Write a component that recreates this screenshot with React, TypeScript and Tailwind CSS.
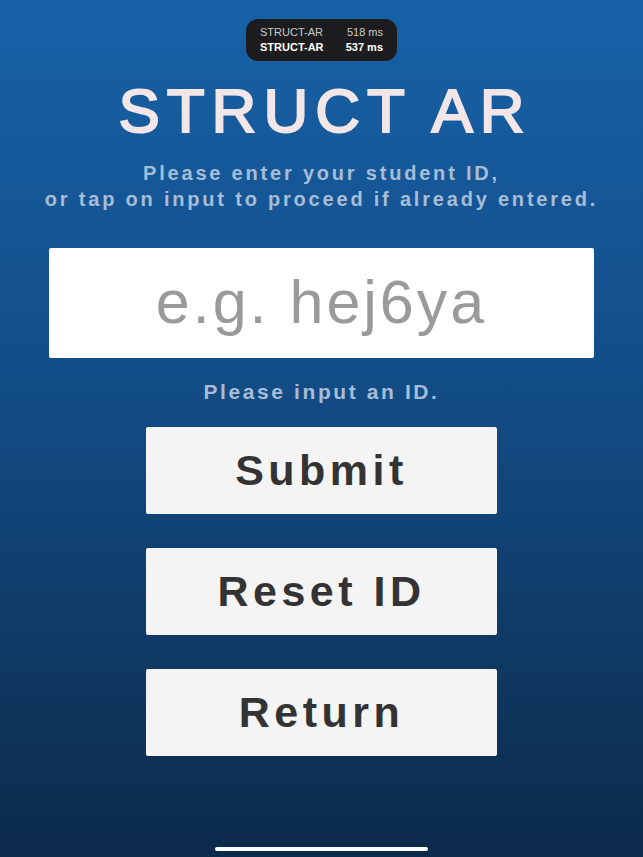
import React from 'react'

const font = { fontFamily: '"Liberation Sans", Arial, sans-serif' }

const Button = ({ label }: { label: string }) => (
  <button className="flex h-[87px] w-[351px] items-center justify-center rounded-[2px] bg-[#f4f4f4] text-[43px] font-bold tracking-[4.5px] text-[#333333]">
    {label}
  </button>
)

const App = () => {
  return (
    <div
      className="flex h-[857px] w-full flex-col items-center overflow-hidden bg-gradient-to-b from-[#1762a8] via-[#124a82] to-[#0c2a4a]"
      style={font}
    >
      {/* recording pill */}
      <div className="mt-[19px] flex h-[42px] w-[151px] flex-col justify-center gap-[2px] rounded-[12px] bg-[#1c1c1e] px-[14px] text-[11px] leading-[13px]">
        <div className="flex justify-between text-[#c9c9cb]">
          <span>STRUCT-AR</span>
          <span>518 ms</span>
        </div>
        <div className="flex justify-between font-bold text-white">
          <span>STRUCT-AR</span>
          <span>537 ms</span>
        </div>
      </div>

      {/* title */}
      <h1 className="mt-[19px] pl-[7px] text-[62px] leading-none tracking-[7px] text-[#f2e6e8] [-webkit-text-stroke:2px_#f2e6e8]">
        STRUCT AR
      </h1>

      {/* instructions */}
      <p className="mt-[18px] text-center text-[20px] font-bold leading-[26px] tracking-[2.8px] text-[#a7bdd6]">
        Please enter your student ID,
        <br />
        or tap on input to proceed if already entered.
      </p>

      {/* id input */}
      <div className="mt-[36px] flex h-[110px] w-[545px] items-center justify-center rounded-[2px] bg-white">
        <input
          type="text"
          placeholder="e.g. hej6ya"
          className="w-full bg-transparent text-center text-[61px] tracking-[3px] text-[#333] outline-none placeholder:text-[#9a9a9a]"
        />
      </div>

      <p className="mt-[18px] text-[21px] font-bold tracking-[2.6px] text-[#a7bdd6]">
        Please input an ID.
      </p>

      {/* actions */}
      <div className="mt-[19px] flex flex-col gap-[34px]">
        <Button label="Submit" />
        <Button label="Reset ID" />
        <Button label="Return" />
      </div>

      {/* home indicator */}
      <div className="mt-auto mb-[6px] h-[4px] w-[213px] rounded-full bg-white" />
    </div>
  )
}

export default App
